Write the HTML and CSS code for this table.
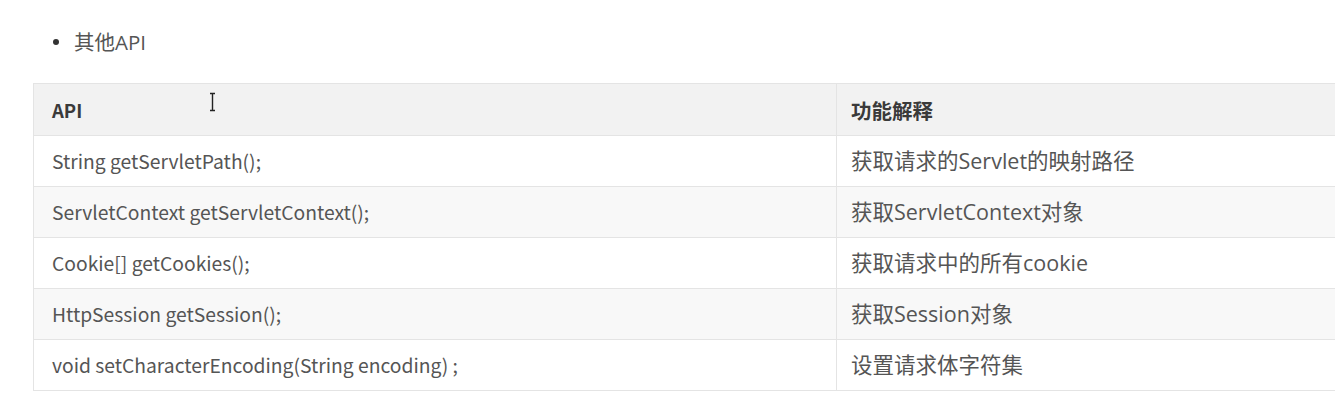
FILE: index.html
```html
<!DOCTYPE html>
<html lang="zh">
<head>
<meta charset="utf-8">
<link rel="stylesheet" href="styles.css">
</head>
<body>
<div class="page">
  <ul class="list">
    <li>其他API</li>
  </ul>
  <table class="api">
    <thead>
      <tr><th class="c1">API</th><th class="c2">功能解释</th></tr>
    </thead>
    <tbody>
      <tr><td>String getServletPath();</td><td>获取请求的Servlet的映射路径</td></tr>
      <tr><td>ServletContext getServletContext();</td><td>获取ServletContext对象</td></tr>
      <tr><td>Cookie[] getCookies();</td><td>获取请求中的所有cookie</td></tr>
      <tr><td>HttpSession getSession();</td><td>获取Session对象</td></tr>
      <tr><td>void setCharacterEncoding(String encoding) ;</td><td>设置请求体字符集</td></tr>
    </tbody>
  </table>
  <svg class="cursor" width="8" height="20" viewBox="0 0 8 20"><path d="M1 1.5h2.5v17H1M3.5 1.5H6M3.5 18.5H6" fill="none" stroke="#222" stroke-width="1.4"/></svg>
</div>
</body>
</html>
```
FILE: styles.css
```css
html, body {
  margin: 0;
  padding: 0;
  background: #fff;
  overflow: hidden;
}
body {
  width: 1335px;
  height: 414px;
  font-family: "Noto Sans CJK SC", "Noto Sans", sans-serif;
  color: #555;
}
.page {
  position: relative;
  padding: 25px 0 0 33px;
}
.list {
  margin: 0;
  padding: 0 0 0 20px;
  font-family: "Open Sans", "Noto Sans CJK SC", sans-serif;
  font-size: 20.5px;
  line-height: 34px;
  color: #555;
}
.list li {
  list-style: none;
  display: flex;
  align-items: center;
  gap: 15px;
}
.list li::before {
  content: "";
  width: 6px;
  height: 6px;
  border-radius: 50%;
  background: #333;
}
.api {
  margin-top: 24px;
  border-collapse: collapse;
  width: 1330px;
  font-size: 19.3px;
  line-height: 24px;
  color: #555;
}
.api th, .api td {
  border: 1px solid #e4e4e4;
  text-align: left;
  padding: 0 0 0 18px;
  height: 50px;
}
.api th {
  background: #f2f2f2;
  font-weight: 700;
  font-size: 18.5px;
  color: #3a3a3a;
  height: 51px;
}
.api .c1 { width: 784px; }
.api td:nth-child(2), .api th:nth-child(2) {
  padding-left: 14px;
  font-family: "Open Sans", "Noto Sans CJK SC", sans-serif;
  font-size: 21.5px;
}
.api th:nth-child(2) {
  font-family: "Noto Sans CJK SC", sans-serif;
  font-size: 20.5px;
}
.api tbody tr:nth-child(even) td {
  background: #f8f8f8;
}
.cursor {
  position: absolute;
  left: 209px;
  top: 92px;
}
```
